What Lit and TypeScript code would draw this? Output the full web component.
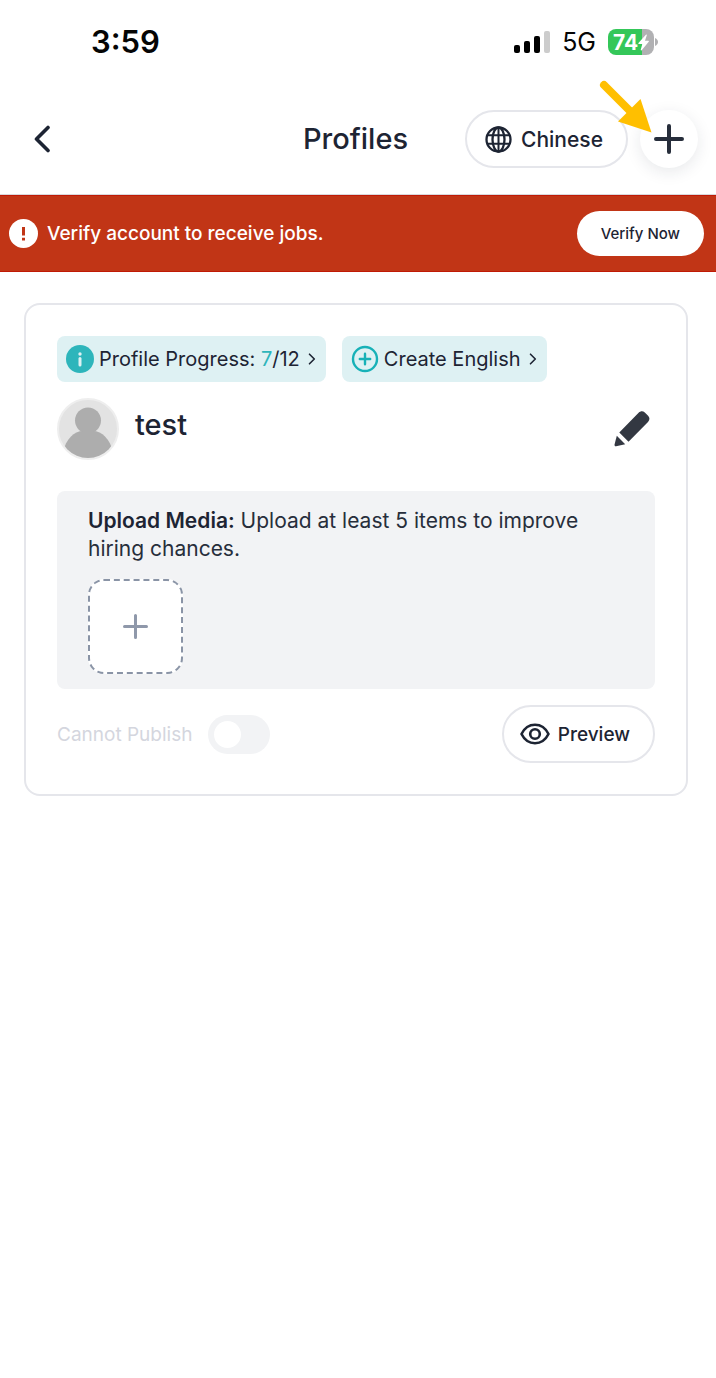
import { LitElement, html, css, svg } from "lit";
import { customElement, property, state } from "lit/decorators.js";

const plus = (size: number, stroke: number) => html`
  <svg width=${size} height=${size} viewBox="0 0 ${size} ${size}" fill="none" stroke="currentColor" stroke-width=${stroke} stroke-linecap="round" aria-hidden="true">
    ${svg`<path d="M${size / 2} ${stroke / 2}V${size - stroke / 2}M${stroke / 2} ${size / 2}H${size - stroke / 2}"/>`}
  </svg>`;

const chevronRight = html`
  <svg width="8" height="14" viewBox="0 0 8 14" fill="none" stroke="currentColor" stroke-width="1.600" stroke-linecap="round" stroke-linejoin="round" aria-hidden="true">
    <path d="M1.500 2.200L6.300 7l-4.800 4.800" />
  </svg>`;

@customElement("status-bar")
class StatusBar extends LitElement {
  static styles = css`
    :host {
      display: flex;
      align-items: center;
      justify-content: space-between;
      height: 84px;
      padding: 0 58px 0 91px;
      box-sizing: border-box;
      color: #050505;
    }
    .time {
      font-size: 31px;
      font-weight: 600;
      line-height: 40px;
    }
    .right {
      display: flex;
      align-items: center;
      gap: 12px;
      font-size: 25px;
    }
    .battery {
      display: flex;
      align-items: center;
      gap: 1px;
    }
    .cell {
      display: flex;
      align-items: center;
      justify-content: center;
      width: 46px;
      height: 26px;
      border-radius: 8px;
      background: linear-gradient(to right, #34c759 74%, #b1b1b3 74%);
      color: #fff;
      font-size: 21px;
      font-weight: 700;
    }
    svg {
      display: block;
      flex: none;
    }
  `;

  render() {
    return html`
      <span class="time">3:59</span>
      <span class="right">
        <svg width="36" height="24" viewBox="0 0 36 24" aria-hidden="true">
          <rect x="0" y="15" width="6" height="8" rx="2" />
          <rect x="10" y="11" width="6" height="12" rx="2" />
          <rect x="20" y="6" width="6" height="17" rx="2" />
          <rect x="30" y="1" width="6" height="22" rx="2" fill="#cccccc" />
        </svg>
        <span>5G</span>
        <span class="battery">
          <span class="cell">
            74
            <svg width="11" height="17" viewBox="0 0 12 18" fill="#fff" aria-hidden="true">
              <path d="M8.600 0.500L0.500 9.600c-.4.500-.2 1 .4 1h3.800L3 17c-.2.800.5 1.100 1 .5L11.700 8.200c.4-.5.2-1-.4-1H7.600L9.600 1.100c.2-.8-.5-1.100-1-.6Z" />
            </svg>
          </span>
          <svg width="3" height="8" viewBox="0 0 3 8" fill="#b1b1b3" aria-hidden="true">
            <path d="M0 0c4 1.500 4 6.500 0 8Z" />
          </svg>
        </span>
      </span>
    `;
  }
}

@customElement("page-header")
class PageHeader extends LitElement {
  static styles = css`
    :host {
      display: grid;
      grid-template-columns: 1fr auto 1fr;
      align-items: center;
      height: 110px;
      padding: 0 18px 0 13px;
      border-bottom: 1px solid #d9d9dc;
    }
    button {
      font: inherit;
      color: inherit;
      border: 0;
      padding: 0;
      background: none;
      cursor: pointer;
    }
    svg {
      display: block;
    }
    .back {
      display: grid;
      place-items: center;
      width: 58px;
      height: 58px;
    }
    .title {
      margin: 0;
      font-size: 29px;
      font-weight: 500;
      line-height: 36px;
    }
    .actions {
      position: relative;
      display: flex;
      justify-content: flex-end;
      gap: 12px;
    }
    .language {
      display: flex;
      align-items: center;
      justify-content: center;
      gap: 9px;
      height: 58px;
      padding: 0 23px 0 18px;
      box-sizing: border-box;
      border: 2px solid #e5e6eb;
      border-radius: 29px;
      background: #fff;
      font-size: 21px;
      font-weight: 500;
    }
    .add {
      display: grid;
      place-items: center;
      width: 58px;
      height: 58px;
      border-radius: 50%;
      background: #fff;
      color: #272e3b;
      box-shadow: 0 4px 16px rgba(30, 40, 60, 0.1);
    }
    .pointer {
      position: absolute;
      right: 46px;
      top: -31px;
      pointer-events: none;
    }
  `;

  render() {
    return html`
      <button class="back" aria-label="Back">
        <svg width="18" height="28" viewBox="0 0 18 28" fill="none" stroke="currentColor" stroke-width="3.600" stroke-linecap="round" stroke-linejoin="round" aria-hidden="true">
          <path d="M15 2.500L3.500 14L15 25.500" />
        </svg>
      </button>
      <h1 class="title">Profiles</h1>
      <div class="actions">
        <button class="language">
          <svg width="27" height="27" viewBox="0 0 27 27" fill="none" stroke="currentColor" stroke-width="2.300" aria-hidden="true">
            <circle cx="13.500" cy="13.500" r="12" />
            <ellipse cx="13.500" cy="13.500" rx="6" ry="12" />
            <path d="M13.500 1.500v24M2.600 9.200h21.800M2.600 17.800h21.800" stroke-width="2" />
          </svg>
          Chinese
        </button>
        <button class="add" aria-label="Add profile">${plus(30, 4)}</button>
        <svg class="pointer" width="54" height="54" viewBox="0 0 54 54" aria-hidden="true">
          <path d="M6 6L34 34" stroke="#ffbf00" stroke-width="8" stroke-linecap="round" />
          <path d="M42.500 20L53.500 53.500L20 42.500Z" fill="#ffbf00" />
        </svg>
      </div>
    `;
  }
}

@customElement("verify-banner")
class VerifyBanner extends LitElement {
  static styles = css`
    :host {
      display: flex;
      align-items: center;
      gap: 9px;
      height: 77px;
      padding: 0 12px 0 9px;
      box-sizing: border-box;
      border-top: 1px solid #c01a05;
      border-bottom: 1px solid #c01a05;
      background: #c13516;
      color: #fff;
    }
    .message {
      flex: 1;
      margin: 0;
      font-size: 19px;
      font-weight: 500;
      line-height: 28px;
    }
    .verify {
      height: 45px;
      padding: 0 24px;
      border: 0;
      border-radius: 23px;
      background: #fff;
      color: #1d2433;
      font: inherit;
      font-size: 15px;
      font-weight: 500;
      cursor: pointer;
    }
    svg {
      display: block;
      flex: none;
    }
  `;

  render() {
    return html`
      <svg width="29" height="29" viewBox="0 0 29 29" aria-hidden="true">
        <circle cx="14.500" cy="14.500" r="14.500" fill="#fff" />
        <path d="M13 8h3v8.500h-3ZM13 18.800h3v2.800h-3Z" fill="#c13516" />
      </svg>
      <p class="message">Verify account to receive jobs.</p>
      <button class="verify">Verify Now</button>
    `;
  }
}

@customElement("profile-card")
class ProfileCard extends LitElement {
  @property() name = "";
  @property({ type: Number }) done = 0;
  @property({ type: Number }) total = 0;

  static styles = css`
    :host {
      display: block;
      padding: 31px;
      border: 2px solid #e5e6eb;
      border-radius: 16px;
      background: #fff;
    }
    button {
      font: inherit;
      color: inherit;
      border: 0;
      padding: 0;
      background: none;
      cursor: pointer;
    }
    svg {
      display: block;
      flex: none;
    }
    .chips {
      display: flex;
      gap: 16px;
    }
    .chip {
      display: flex;
      align-items: center;
      gap: 5px;
      height: 46px;
      padding: 0 10px 0 9px;
      border-radius: 8px;
      background: #def1f3;
      font-size: 20px;
      white-space: nowrap;
    }
    .label {
      margin-right: 3px;
    }
    .count {
      color: #2db5bb;
    }
    .teal {
      color: #17b1b7;
    }
    .identity {
      display: flex;
      align-items: center;
      gap: 16px;
      margin-top: 16px;
    }
    .name {
      flex: 1;
      margin: 0;
      padding-bottom: 8px;
      font-size: 29px;
      font-weight: 500;
      line-height: 36px;
    }
    .edit {
      padding: 0 5px 0 8px;
    }
    .media {
      margin-top: 31px;
      padding: 16px 31px 15px;
      border-radius: 8px;
      background: #f2f3f5;
    }
    .hint {
      margin: 0 0 16px;
      font-size: 21px;
      line-height: 28px;
      color: #272e3b;
    }
    .strong {
      font-weight: 600;
      color: #1d2433;
    }
    .tile {
      display: grid;
      place-items: center;
      width: 95px;
      height: 95px;
      border-radius: 16px;
      box-sizing: border-box;
      border: 2px dashed #8a94a6;
      background: #fff;
      color: #8f98aa;
    }
    .footer {
      display: flex;
      align-items: center;
      justify-content: space-between;
      margin-top: 16px;
    }
    .publish {
      display: flex;
      align-items: center;
      gap: 16px;
      font-size: 19px;
      color: #d4d6de;
    }
    .switch {
      appearance: none;
      display: flex;
      align-items: center;
      width: 62px;
      height: 39px;
      margin: 0;
      padding: 0 6px;
      border-radius: 20px;
      background: #f2f3f5;
    }
    .switch::before {
      content: "";
      width: 27px;
      height: 27px;
      border-radius: 50%;
      background: #fff;
    }
    .preview {
      display: flex;
      align-items: center;
      gap: 8px;
      height: 58px;
      padding: 0 23px 0 16px;
      box-sizing: border-box;
      border: 2px solid #e5e6eb;
      border-radius: 29px;
      font-size: 19px;
      font-weight: 500;
    }
  `;

  render() {
    return html`
      <div class="chips">
        <button class="chip">
          <svg width="28" height="28" viewBox="0 0 28 28" aria-hidden="true">
            <circle cx="14" cy="14" r="14" fill="#2db5bb" />
            <circle cx="14" cy="9" r="1.700" fill="#def1f3" />
            <path d="M14 13.500v6.500" stroke="#def1f3" stroke-width="3" stroke-linecap="round" />
          </svg>
          <span class="label">Profile Progress: <span class="count">${this.done}</span>/${this.total}</span>
          ${chevronRight}
        </button>
        <button class="chip">
          <svg class="teal" width="28" height="28" viewBox="0 0 28 28" fill="none" stroke="currentColor" stroke-width="2.400" stroke-linecap="round" aria-hidden="true">
            <circle cx="14" cy="14" r="12" />
            <path d="M14 8.800v10.400M8.800 14h10.400" />
          </svg>
          <span class="label">Create English</span>
          ${chevronRight}
        </button>
      </div>

      <div class="identity">
        <svg width="62" height="62" viewBox="0 0 62 62" aria-hidden="true">
          <clipPath id="disc"><circle cx="31" cy="31" r="29" /></clipPath>
          <circle cx="31" cy="31" r="30" fill="#e3e3e3" stroke="#eeeeee" stroke-width="2" />
          <g clip-path="url(#disc)" fill="#adadad">
            <circle cx="31" cy="22.500" r="13" />
            <path d="M6 54C9 41 17 33 26 33h10c9 0 17 8 20 21v8H6Z" />
          </g>
        </svg>
        <h2 class="name">${this.name}</h2>
        <button class="edit" aria-label="Edit profile">
          <svg width="36" height="36" viewBox="0 0 36 36" fill="#333842" aria-hidden="true">
            <path d="M24.600 1.800c2-2 4.400-2 6.200-.3l3.300 3.300c1.800 1.800 1.800 4.200-.1 6.100L14.500 30.800L5.300 21.400Z" />
            <path d="M2.800 24.800L11.200 33.200L2.100 35.200C1 35.400.4 34.700.5 33.700Z" />
          </svg>
        </button>
      </div>

      <div class="media">
        <p class="hint"><span class="strong">Upload Media:</span> Upload at least 5 items to improve hiring chances.</p>
        <button class="tile" aria-label="Upload media">${plus(25, 3)}</button>
      </div>

      <div class="footer">
        <label class="publish">
          Cannot Publish
          <input class="switch" type="checkbox" role="switch" disabled />
        </label>
        <button class="preview">
          <svg width="30" height="22" viewBox="0 0 30 22" fill="none" stroke="currentColor" stroke-width="2.600" stroke-linejoin="round" aria-hidden="true">
            <path d="M1.500 11C4.500 5 9.300 1.800 15 1.800S25.500 5 28.500 11C25.500 17 20.700 20.200 15 20.200S4.500 17 1.500 11Z" />
            <circle cx="15" cy="11" r="4.800" />
          </svg>
          Preview
        </button>
      </div>
    `;
  }
}

@customElement("app-root")
class AppRoot extends LitElement {
  @state() private profiles = [{ name: "test", done: 7, total: 12 }];

  static styles = css`
    :host {
      display: block;
      min-height: 100vh;
      background: #fff;
      color: #1d2433;
      font-family: Inter, "Liberation Sans", sans-serif;
    }
    .list {
      display: flex;
      flex-direction: column;
      gap: 24px;
      padding: 31px 28px 31px 24px;
    }
  `;

  render() {
    return html`
      <status-bar></status-bar>
      <page-header></page-header>
      <verify-banner></verify-banner>
      <main class="list">
        ${this.profiles.map(
          (p) => html`<profile-card .name=${p.name} .done=${p.done} .total=${p.total}></profile-card>`
        )}
      </main>
    `;
  }
}
